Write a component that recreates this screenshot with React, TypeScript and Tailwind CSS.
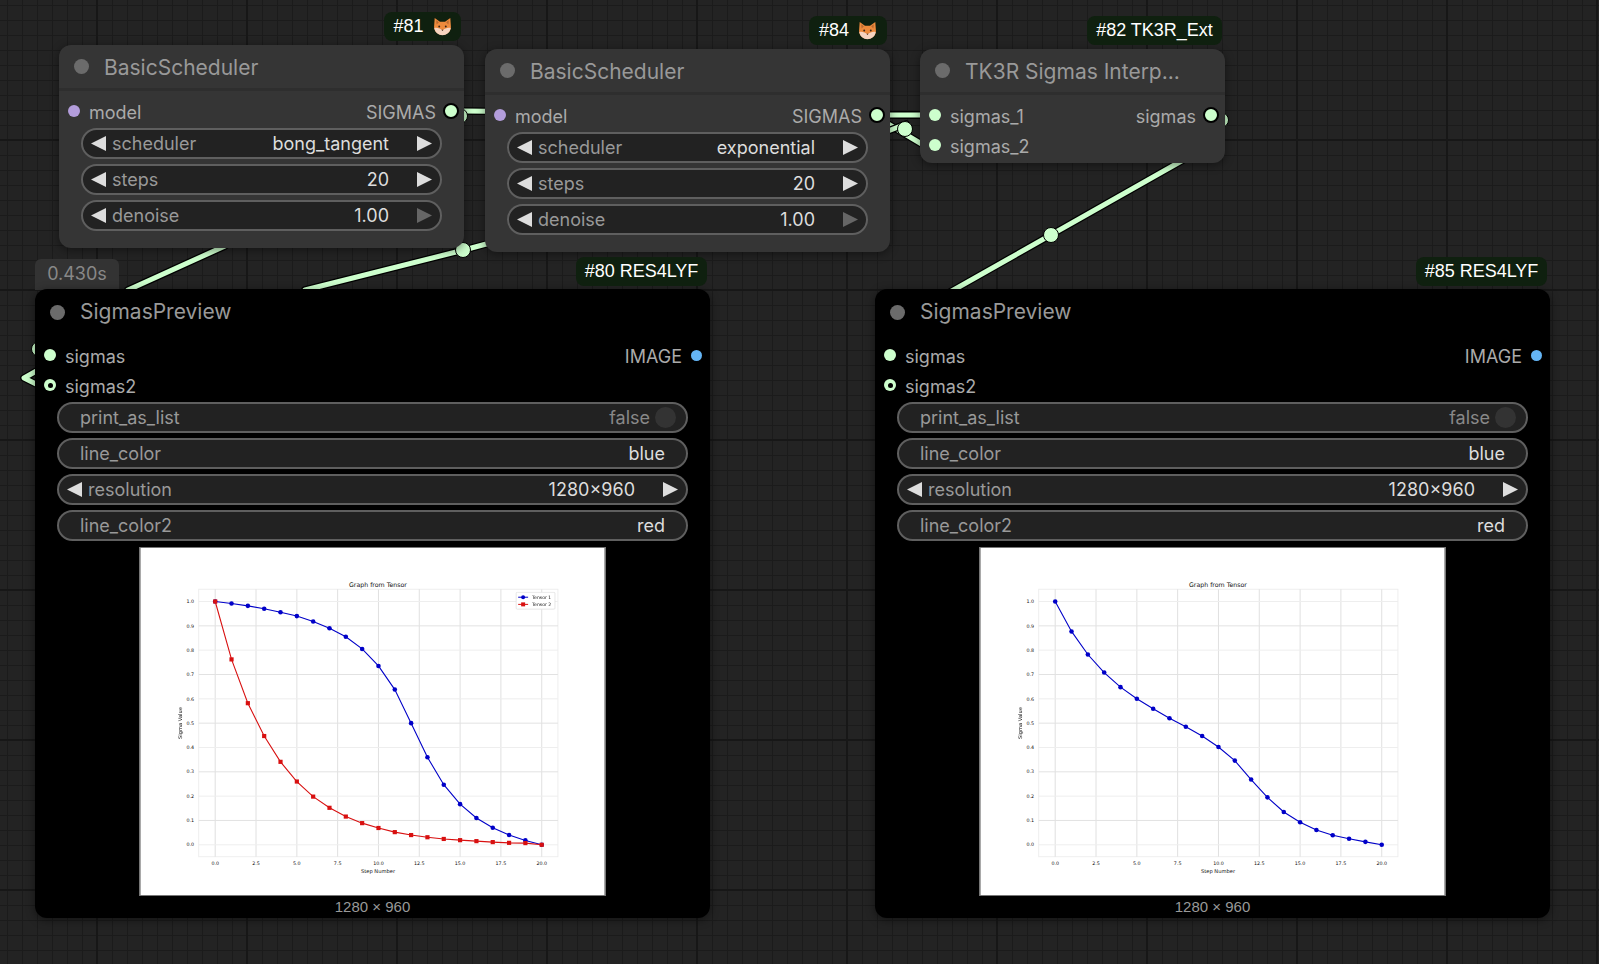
const SIGMA = "#CDFFCD"

const blue1 = [1, 0.992, 0.982, 0.97, 0.956, 0.94, 0.918, 0.89, 0.855, 0.805, 0.735, 0.638, 0.5, 0.36, 0.247, 0.167, 0.11, 0.07, 0.04, 0.018, 0]
const red1 = [1, 0.762, 0.582, 0.447, 0.341, 0.26, 0.198, 0.152, 0.116, 0.089, 0.069, 0.052, 0.04, 0.031, 0.024, 0.019, 0.015, 0.011, 0.008, 0.007, 0]
const blue2 = [1, 0.877, 0.782, 0.708, 0.648, 0.6, 0.559, 0.52, 0.485, 0.447, 0.402, 0.346, 0.268, 0.195, 0.135, 0.093, 0.061, 0.039, 0.025, 0.012, 0]

// plot coords, relative to the 467x349 image
const px = (step: number) => 75.3 + step * 16.42
const py = (v: number) => 298.5 - v * 244.7
const pts = (data: number[]) => data.map((v, i) => `${px(i)},${py(v)}`).join(" ")

function Chart({ series, legend }: { series: { data: number[]; color: string; square?: boolean }[]; legend?: boolean }) {
  const xticks = ["0.0", "2.5", "5.0", "7.5", "10.0", "12.5", "15.0", "17.5", "20.0"]
  const yticks = [0, 0.1, 0.2, 0.3, 0.4, 0.5, 0.6, 0.7, 0.8, 0.9, 1]
  return (
    <svg viewBox="0 0 467 349" className="block h-full w-full blur-[0.35px]" style={{ fontFamily: "'DejaVu Sans', sans-serif" }}>
      <rect width="467" height="349" fill="#fff" />
      <rect x="58.7" y="41.5" width="361.3" height="269" fill="none" stroke="#eeeeee" />
      {xticks.map((t, i) => (
        <g key={t}>
          <line x1={px(i * 2.5)} x2={px(i * 2.5)} y1="41.5" y2="310.5" stroke="#e0e0e0" />
          <text x={px(i * 2.5)} y="319" fontSize="4.8" textAnchor="middle" fill="#111">{t}</text>
        </g>
      ))}
      {yticks.map((v, i) => (
        <g key={v}>
          <line x1="58.7" x2="420" y1={py(v)} y2={py(v)} stroke={i % 2 === 0 ? "#eeeeee" : "#e2e2e2"} />
          <text x="54" y={py(v) + 1.7} fontSize="4.8" textAnchor="end" fill="#111">{v.toFixed(1)}</text>
        </g>
      ))}
      <text x="239" y="39" fontSize="6.3" textAnchor="middle" fill="#111">Graph from Tensor</text>
      <text x="239" y="326.5" fontSize="5.2" textAnchor="middle" fill="#111">Step Number</text>
      <text x="42" y="176" fontSize="5.2" textAnchor="middle" fill="#111" transform="rotate(-90 42 176)">Sigma Value</text>
      {series.map((s) => (
        <g key={s.color}>
          <polyline points={pts(s.data)} fill="none" stroke={s.color} strokeWidth="1.1" />
          {s.data.map((v, i) =>
            s.square ? (
              <rect key={i} x={px(i) - 2.1} y={py(v) - 2.1} width="4.2" height="4.2" fill={s.color} />
            ) : (
              <circle key={i} cx={px(i)} cy={py(v)} r="2.3" fill={s.color} />
            ),
          )}
        </g>
      ))}
      {legend && (
        <g>
          <rect x="378" y="44.5" width="39" height="17" rx="1" fill="#fff" stroke="#dcdcdc" strokeWidth="0.7" />
          <line x1="380" x2="390" y1="49.5" y2="49.5" stroke="#0000c8" />
          <circle cx="385" cy="49.5" r="2" fill="#0000c8" />
          <text x="394" y="51" fontSize="4.6" fill="#111">Tensor 1</text>
          <line x1="380" x2="390" y1="56.7" y2="56.7" stroke="#d81010" />
          <rect x="383" y="54.7" width="4" height="4" fill="#d81010" />
          <text x="394" y="58.2" fontSize="4.6" fill="#111">Tensor 2</text>
        </g>
      )}
    </svg>
  )
}

function Fox() {
  return (
    <svg viewBox="0 0 18 18" className="h-[19px] w-[19px] shrink-0 blur-[0.3px]">
      <path d="M1.6 1 L6.6 4.4 L11.4 4.4 L16.4 1 L17 9.5 C17 13.6 13.4 17 9 17 C4.6 17 1 13.6 1 9.5 Z" fill="#ee8a3c" />
      <path d="M3 3 L5.6 5 L3.4 7.2 Z M15 3 L12.4 5 L14.6 7.2 Z" fill="#b86a32" />
      <path d="M1.2 10.4 C4 9.8 6.8 10.8 9 12.6 C11.2 10.8 14 9.8 16.8 10.4 C16.2 14.4 12.8 17.2 9 17.2 C5.2 17.2 1.8 14.4 1.2 10.4 Z" fill="#f6d3c0" />
      <circle cx="5.9" cy="9" r="0.9" fill="#3a2416" />
      <circle cx="12.1" cy="9" r="0.9" fill="#3a2416" />
      <path d="M8 12 H10 L9 13.2 Z" fill="#3a2416" />
    </svg>
  )
}

function Arrow({ dir, dim }: { dir: "left" | "right"; dim?: boolean }) {
  return (
    <svg viewBox="0 0 15 15" className="h-[15px] w-[15px] shrink-0">
      <polygon points={dir === "left" ? "15,0 15,15 0,7.5" : "0,0 0,15 15,7.5"} fill={dim ? "#666666" : "#dddddd"} />
    </svg>
  )
}

function NumberWidget({ label, value, dimRight }: { label: string; value: string; dimRight?: boolean }) {
  return (
    <div className="flex h-[31px] items-center rounded-full border-2 border-[#5f5f5f] bg-[#222222] pl-[8px] pr-[8px] text-[18px] leading-none">
      <Arrow dir="left" />
      <span className="ml-[6px] text-[#999999]">{label}</span>
      <span className="ml-auto mr-[28px] text-[#dddddd]">{value}</span>
      <Arrow dir="right" dim={dimRight} />
    </div>
  )
}

function TextWidget({ label, value, toggle }: { label: string; value: string; toggle?: boolean }) {
  return (
    <div className="flex h-[31px] items-center rounded-full border-2 border-[#5f5f5f] bg-[#222222] pl-[21px] text-[18px] leading-none">
      <span className="text-[#999999]">{label}</span>
      {toggle ? (
        <>
          <span className="ml-auto text-[#888888]">{value}</span>
          <span className="ml-[5px] mr-[10px] h-[21px] w-[21px] rounded-full bg-[#333333]" />
        </>
      ) : (
        <span className="ml-auto mr-[21px] text-[#dddddd]">{value}</span>
      )}
    </div>
  )
}

function InSlot({ label, color, hollow }: { label: string; color: string; hollow?: boolean }) {
  return (
    <div className="flex h-[30px] items-center gap-[9px] pl-[9px] text-[18px] text-[#aaaaaa]">
      <span
        className="flex h-[12px] w-[12px] items-center justify-center rounded-full"
        style={{ backgroundColor: color }}
      >
        {hollow && <span className="h-[5px] w-[5px] rounded-full bg-black" />}
      </span>
      <span className="pt-[2px]">{label}</span>
    </div>
  )
}

function OutSlot({ label, color, ring }: { label: string; color: string; ring?: boolean }) {
  return (
    <div className="flex items-center gap-[7px] text-[18px] text-[#aaaaaa]">
      <span className="pt-[2px]">{label}</span>
      <span
        className={ring ? "h-[16px] w-[16px] rounded-full border-2 border-black" : "mx-[2px] h-[11px] w-[11px] rounded-full"}
        style={{ backgroundColor: color }}
      />
    </div>
  )
}

function Header({ title }: { title: string }) {
  return (
    <div className="flex h-[46px] items-center gap-[15px] border-b-[3px] border-[#2e2e2e] pl-[15px] text-[21px] text-[#999999]">
      <span className="h-[15px] w-[15px] rounded-full bg-[#6b6b6b]" />
      <span className="pt-[3px]">{title}</span>
    </div>
  )
}

function Badge({ id, tag, className }: { id: string; tag?: string; className: string }) {
  return (
    <div
      className={`absolute flex h-[29px] items-center justify-center gap-[9px] rounded-[8px] bg-[#0f200f] text-[18px] text-white ${className}`}
      style={{ fontFamily: "'Liberation Sans', Arial, sans-serif" }}
    >
      <span>{tag ? `${id} ${tag}` : id}</span>
      {!tag && <Fox />}
    </div>
  )
}

function Scheduler({ value, className }: { value: string; className: string }) {
  return (
    <div className={`absolute w-[405px] rounded-[12px] bg-[#353535] shadow-[0_2px_10px_rgba(0,0,0,0.45)] ${className}`}>
      <Header title="BasicScheduler" />
      <div className="relative mt-[5px]">
        <InSlot label="model" color="#B39DDB" />
        <div className="absolute right-[5px] top-0 flex h-[30px] items-center">
          <OutSlot label="SIGMAS" color={SIGMA} ring />
        </div>
      </div>
      <div className="mt-[2px] flex flex-col gap-[5px] pb-[17px] pl-[22px] pr-[22px]">
        <NumberWidget label="scheduler" value={value} />
        <NumberWidget label="steps" value="20" />
        <NumberWidget label="denoise" value="1.00" dimRight />
      </div>
    </div>
  )
}

function Preview({ className, series, legend }: { className: string; series: { data: number[]; color: string; square?: boolean }[]; legend?: boolean }) {
  return (
    <div className={`absolute h-[629px] w-[675px] rounded-[12px] bg-black shadow-[0_2px_10px_rgba(0,0,0,0.45)] ${className}`}>
      <div className="flex h-[46px] items-center gap-[15px] pl-[15px] text-[21px] text-[#999999]">
        <span className="h-[15px] w-[15px] rounded-full bg-[#6b6b6b]" />
        <span>SigmasPreview</span>
      </div>
      <div className="relative mt-[5px]">
        <InSlot label="sigmas" color={SIGMA} />
        <InSlot label="sigmas2" color={SIGMA} hollow />
        <div className="absolute right-[6px] top-0 flex h-[30px] items-center">
          <OutSlot label="IMAGE" color="#64B5F6" />
        </div>
      </div>
      <div className="mt-[2px] flex flex-col gap-[5px] pl-[22px] pr-[22px]">
        <TextWidget label="print_as_list" value="false" toggle />
        <TextWidget label="line_color" value="blue" />
        <NumberWidget label="resolution" value="1280×960" />
        <TextWidget label="line_color2" value="red" />
      </div>
      <div className="ml-[104px] mt-[6px] h-[349px] w-[467px] border border-[#777777]">
        <Chart series={series} legend={legend} />
      </div>
      <div
        className="mt-[1px] text-center text-[15px] leading-[20px] text-[#999999]"
        style={{ fontFamily: "'Liberation Sans', Arial, sans-serif" }}
      >
        1280 × 960
      </div>
    </div>
  )
}

function Link({ d }: { d: string }) {
  return (
    <g fill="none" strokeLinejoin="round" strokeLinecap="round">
      <path d={d} stroke="#000000" strokeWidth="7.5" />
      <path d={d} stroke={SIGMA} strokeWidth="5" />
    </g>
  )
}

function Midpoint({ x, y }: { x: number; y: number }) {
  return <circle cx={x} cy={y} r="7.5" fill={SIGMA} stroke="#000" strokeWidth="1" />
}

export default function App() {
  return (
    <div
      className="relative h-[964px] w-[1599px] overflow-hidden bg-[#232323] bg-[linear-gradient(to_right,#171717_2px,transparent_2px),linear-gradient(to_bottom,#171717_2px,transparent_2px),linear-gradient(to_right,#1b1b1b_1.5px,transparent_1.5px),linear-gradient(to_bottom,#1b1b1b_1.5px,transparent_1.5px)] bg-[size:150px_150px,150px_150px,15px_15px,15px_15px] bg-[position:96px_0,0_139px,7px_0,0_5px]"
      style={{ fontFamily: "Inter, 'Noto Sans', sans-serif" }}
    >
      <svg className="absolute inset-0" width="1599" height="964">
        <Link d="M451 111 L464 111 L920 115" />
        <Link d="M128 290 L225 246" />
        <Link d="M305 290 L464 250 L490 243" />
        <Midpoint x={463} y={250} />
        <Midpoint x={460} y={116} />
        <Link d="M878 115 L925 115" />
        <Link d="M878 118 L925 146" />
        <Link d="M888 131 L906 124" />
        <Midpoint x={905} y={129} />
        <Link d="M1185 159 L950 292" />
        <Midpoint x={1051} y={235} />
        <Midpoint x={1221} y={120} />
        <Link d="M40 369 L24 378 L40 386" />
        <Midpoint x={39} y={349} />
      </svg>

      <Scheduler value="bong_tangent" className="left-[59px] top-[45px]" />
      <Scheduler value="exponential" className="left-[485px] top-[49px]" />

      <div className="absolute left-[920px] top-[49px] h-[114px] w-[305px] rounded-[12px] bg-[#353535] shadow-[0_2px_10px_rgba(0,0,0,0.45)]">
        <Header title="TK3R Sigmas Interp..." />
        <div className="relative mt-[5px]">
          <InSlot label="sigmas_1" color={SIGMA} />
          <InSlot label="sigmas_2" color={SIGMA} />
          <div className="absolute right-[6px] top-0 flex h-[30px] items-center">
            <OutSlot label="sigmas" color={SIGMA} ring />
          </div>
        </div>
      </div>

      <div className="absolute left-[35px] top-[259px] flex h-[31px] w-[84px] items-center justify-center rounded-t-[6px] bg-[#333333] pb-[2px] text-[18px] text-[#888888]">
        0.430s
      </div>

      <Preview
        className="left-[35px] top-[289px]"
        series={[
          { data: blue1, color: "#0000c8" },
          { data: red1, color: "#d81010", square: true },
        ]}
        legend
      />
      <Preview className="left-[875px] top-[289px]" series={[{ data: blue2, color: "#0000c8" }]} />

      <Badge id="#81" className="left-[384px] top-[12px] w-[77px]" />
      <Badge id="#84" className="left-[809px] top-[16px] w-[78px]" />
      <Badge id="#82" tag="TK3R_Ext" className="left-[1087px] top-[16px] w-[135px]" />
      <Badge id="#80" tag="RES4LYF" className="left-[576px] top-[257px] w-[131px]" />
      <Badge id="#85" tag="RES4LYF" className="left-[1416px] top-[257px] w-[131px]" />
    </div>
  )
}
